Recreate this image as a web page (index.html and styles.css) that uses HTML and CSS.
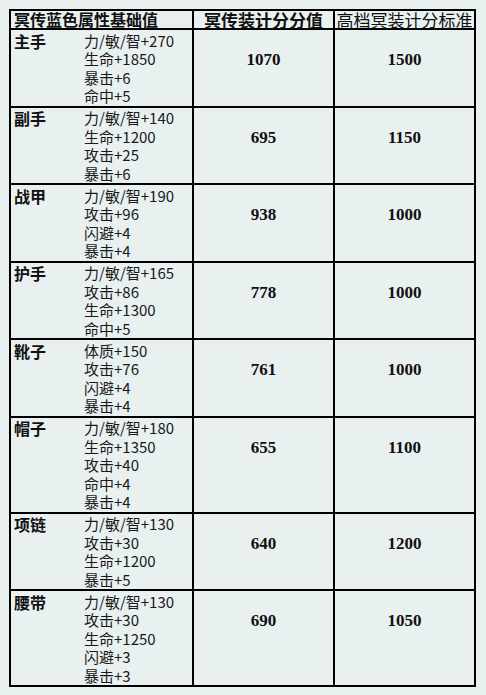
FILE: index.html
```html
<!DOCTYPE html>
<html lang="zh-CN">
<head>
<meta charset="utf-8">
<title>冥传装计分</title>
<link rel="stylesheet" href="styles.css">
</head>
<body>
<table class="score-table">
  <colgroup>
    <col class="col-attr">
    <col class="col-score">
    <col class="col-std">
  </colgroup>
  <thead>
    <tr>
      <th class="h-attr">冥传蓝色属性基础值</th>
      <th class="h-score">冥传装计分分值</th>
      <th class="h-std">高档冥装计分标准</th>
    </tr>
  </thead>
  <tbody>
    <tr>
      <td class="attr-cell"><div class="item"><span class="name">主手</span><div class="attrs"><div>力/敏/智+270</div><div>生命+1850</div><div>暴击+6</div><div>命中+5</div></div></div></td>
      <td class="val">1070</td>
      <td class="val">1500</td>
    </tr>
    <tr>
      <td class="attr-cell"><div class="item"><span class="name">副手</span><div class="attrs"><div>力/敏/智+140</div><div>生命+1200</div><div>攻击+25</div><div>暴击+6</div></div></div></td>
      <td class="val">695</td>
      <td class="val">1150</td>
    </tr>
    <tr>
      <td class="attr-cell"><div class="item"><span class="name">战甲</span><div class="attrs"><div>力/敏/智+190</div><div>攻击+96</div><div>闪避+4</div><div>暴击+4</div></div></div></td>
      <td class="val">938</td>
      <td class="val">1000</td>
    </tr>
    <tr>
      <td class="attr-cell"><div class="item"><span class="name">护手</span><div class="attrs"><div>力/敏/智+165</div><div>攻击+86</div><div>生命+1300</div><div>命中+5</div></div></div></td>
      <td class="val">778</td>
      <td class="val">1000</td>
    </tr>
    <tr>
      <td class="attr-cell"><div class="item"><span class="name">靴子</span><div class="attrs"><div>体质+150</div><div>攻击+76</div><div>闪避+4</div><div>暴击+4</div></div></div></td>
      <td class="val">761</td>
      <td class="val">1000</td>
    </tr>
    <tr>
      <td class="attr-cell"><div class="item"><span class="name">帽子</span><div class="attrs"><div>力/敏/智+180</div><div>生命+1350</div><div>攻击+40</div><div>命中+4</div><div>暴击+4</div></div></div></td>
      <td class="val">655</td>
      <td class="val">1100</td>
    </tr>
    <tr>
      <td class="attr-cell"><div class="item"><span class="name">项链</span><div class="attrs"><div>力/敏/智+130</div><div>攻击+30</div><div>生命+1200</div><div>暴击+5</div></div></div></td>
      <td class="val">640</td>
      <td class="val">1200</td>
    </tr>
    <tr>
      <td class="attr-cell"><div class="item"><span class="name">腰带</span><div class="attrs"><div>力/敏/智+130</div><div>攻击+30</div><div>生命+1250</div><div>闪避+3</div><div>暴击+3</div></div></div></td>
      <td class="val">690</td>
      <td class="val">1050</td>
    </tr>
  </tbody>
</table>
</body>
</html>
```

FILE: styles.css
```css
html {
  background: #e9f0f0;
}

body {
  margin: 9px;
  background: #e9f0f0;
  color: #111;
  font-family: "Noto Sans CJK SC", "Liberation Sans", sans-serif;
}

.score-table {
  table-layout: fixed;
  width: 467px;
  border-collapse: separate;
  border-spacing: 0;
  border-top: 2px solid #000;
  border-left: 2px solid #000;
}

.col-attr { width: 183px; }
.col-score { width: 141px; }
.col-std { width: 141px; }

.score-table th,
.score-table td {
  border-right: 2px solid #000;
  border-bottom: 2px solid #000;
  padding: 0;
  vertical-align: top;
}

.score-table th {
  height: 17px;
  line-height: 17px;
  font-size: 16px;
  white-space: nowrap;
}

.score-table .h-attr {
  text-align: left;
  padding-left: 3px;
  font-weight: 700;
}

.score-table .h-score {
  text-align: center;
  font-size: 17px;
  font-weight: 700;
}

.score-table .h-std {
  text-align: center;
  font-size: 17px;
  font-weight: 400;
}

.score-table .attr-cell {
  padding: 1.5px 0 0 3px;
}

.item {
  display: flex;
  line-height: 18.5px;
}

.name {
  width: 70px;
  flex: none;
  font-size: 16px;
  font-weight: 700;
}

.attrs {
  font-size: 15px;
  color: #1a1a1a;
}

.score-table .val {
  text-align: center;
  padding-top: 21px;
  line-height: 18.5px;
  font-family: "Liberation Serif", serif;
  font-size: 17px;
  font-weight: 700;
}
```
